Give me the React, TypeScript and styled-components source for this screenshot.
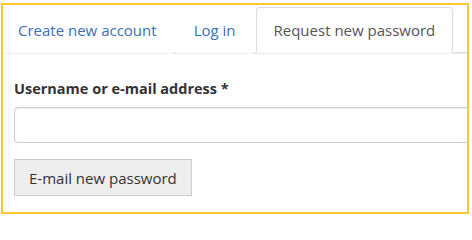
import styled, { createGlobalStyle } from "styled-components";

const GlobalStyle = createGlobalStyle`
    html, body {
        margin: 0;
        padding: 0;
        background: #FFFFFF;
    }

    body {
        font-family: "Open Sans", "Noto Sans", Arial, sans-serif;
        font-size: 15px;
        color: #333333;
    }
`

const TABS = [
    {label: "Create new account", active: false},
    {label: "Log in", active: false},
    {label: "Request new password", active: true},
]

const App = () => {
    return (
        <>
            <GlobalStyle/>
            <StyledPage>
                <StyledFrame>
                    <StyledTabList>
                        {
                            TABS.map((item) => {
                                return (
                                    <StyledTab key={item.label} $isActive={item.active}>
                                        {item.label}
                                    </StyledTab>
                                )
                            })
                        }
                    </StyledTabList>

                    <StyledForm onSubmit={(e) => e.preventDefault()}>
                        <StyledLabel htmlFor="name">Username or e-mail address *</StyledLabel>
                        <StyledInput id="name" type="text"/>
                        <StyledSubmitBtn type="submit">E-mail new password</StyledSubmitBtn>
                    </StyledForm>
                </StyledFrame>
            </StyledPage>
        </>
    )
}

export default App

const StyledPage = styled.div`
    padding: 3px 0 0 1px;
`

const StyledFrame = styled.div`
    box-sizing: border-box;
    width: 468px;
    height: 211px;
    border: 2px solid #FCC830;
    overflow: hidden;
`

const StyledTabList = styled.ul`
    display: flex;
    align-items: flex-end;
    margin: 0;
    padding: 2px 0 0 0;
    list-style: none;
    border-bottom: 1px solid #DDDDDD;
    box-shadow: 0 1px 0 #EEEEEE;
`

const StyledTab = styled.li<{ $isActive: boolean }>`
    box-sizing: border-box;
    height: 46px;
    margin: 0 2px -1px 0;
    padding: 12px 17px 0 17px;
    line-height: 20px;
    white-space: nowrap;
    cursor: pointer;
    border: 1px solid ${(props) => props.$isActive ? "#DDDDDD" : "transparent"};
    border-bottom-color: ${(props) => props.$isActive ? "#FFFFFF" : "transparent"};
    border-radius: 4px 4px 0 0;
    background: #FFFFFF;
    color: ${(props) => props.$isActive ? "#555555" : "#3B6FB6"};

    &:first-child {
        padding-left: 14px;
        padding-right: 16px;
    }
`

const StyledForm = styled.form`
    display: flex;
    flex-direction: column;
    align-items: flex-start;
    padding: 26px 0 0 11px;
`

const StyledLabel = styled.label`
    font-size: 14.5px;
    font-weight: 700;
    line-height: 20px;
    color: #333333;
    margin-bottom: 8px;
`

const StyledInput = styled.input`
    box-sizing: border-box;
    width: 480px;
    height: 36px;
    padding: 6px 12px;
    font-family: inherit;
    font-size: 15px;
    border: 1px solid #CCCCCC;
    border-radius: 4px;
    box-shadow: inset 0 1px 1px rgba(0, 0, 0, 0.075);
    outline: none;
`

const StyledSubmitBtn = styled.button`
    box-sizing: border-box;
    height: 37px;
    margin-top: 16px;
    padding: 0 14px;
    font-family: inherit;
    font-size: 15px;
    color: #333333;
    background: #EEEEEE;
    border: 1px solid #CCCCCC;
    border-radius: 0;
    cursor: pointer;

    &:hover {
        background: #E2E2E2;
    }
`
